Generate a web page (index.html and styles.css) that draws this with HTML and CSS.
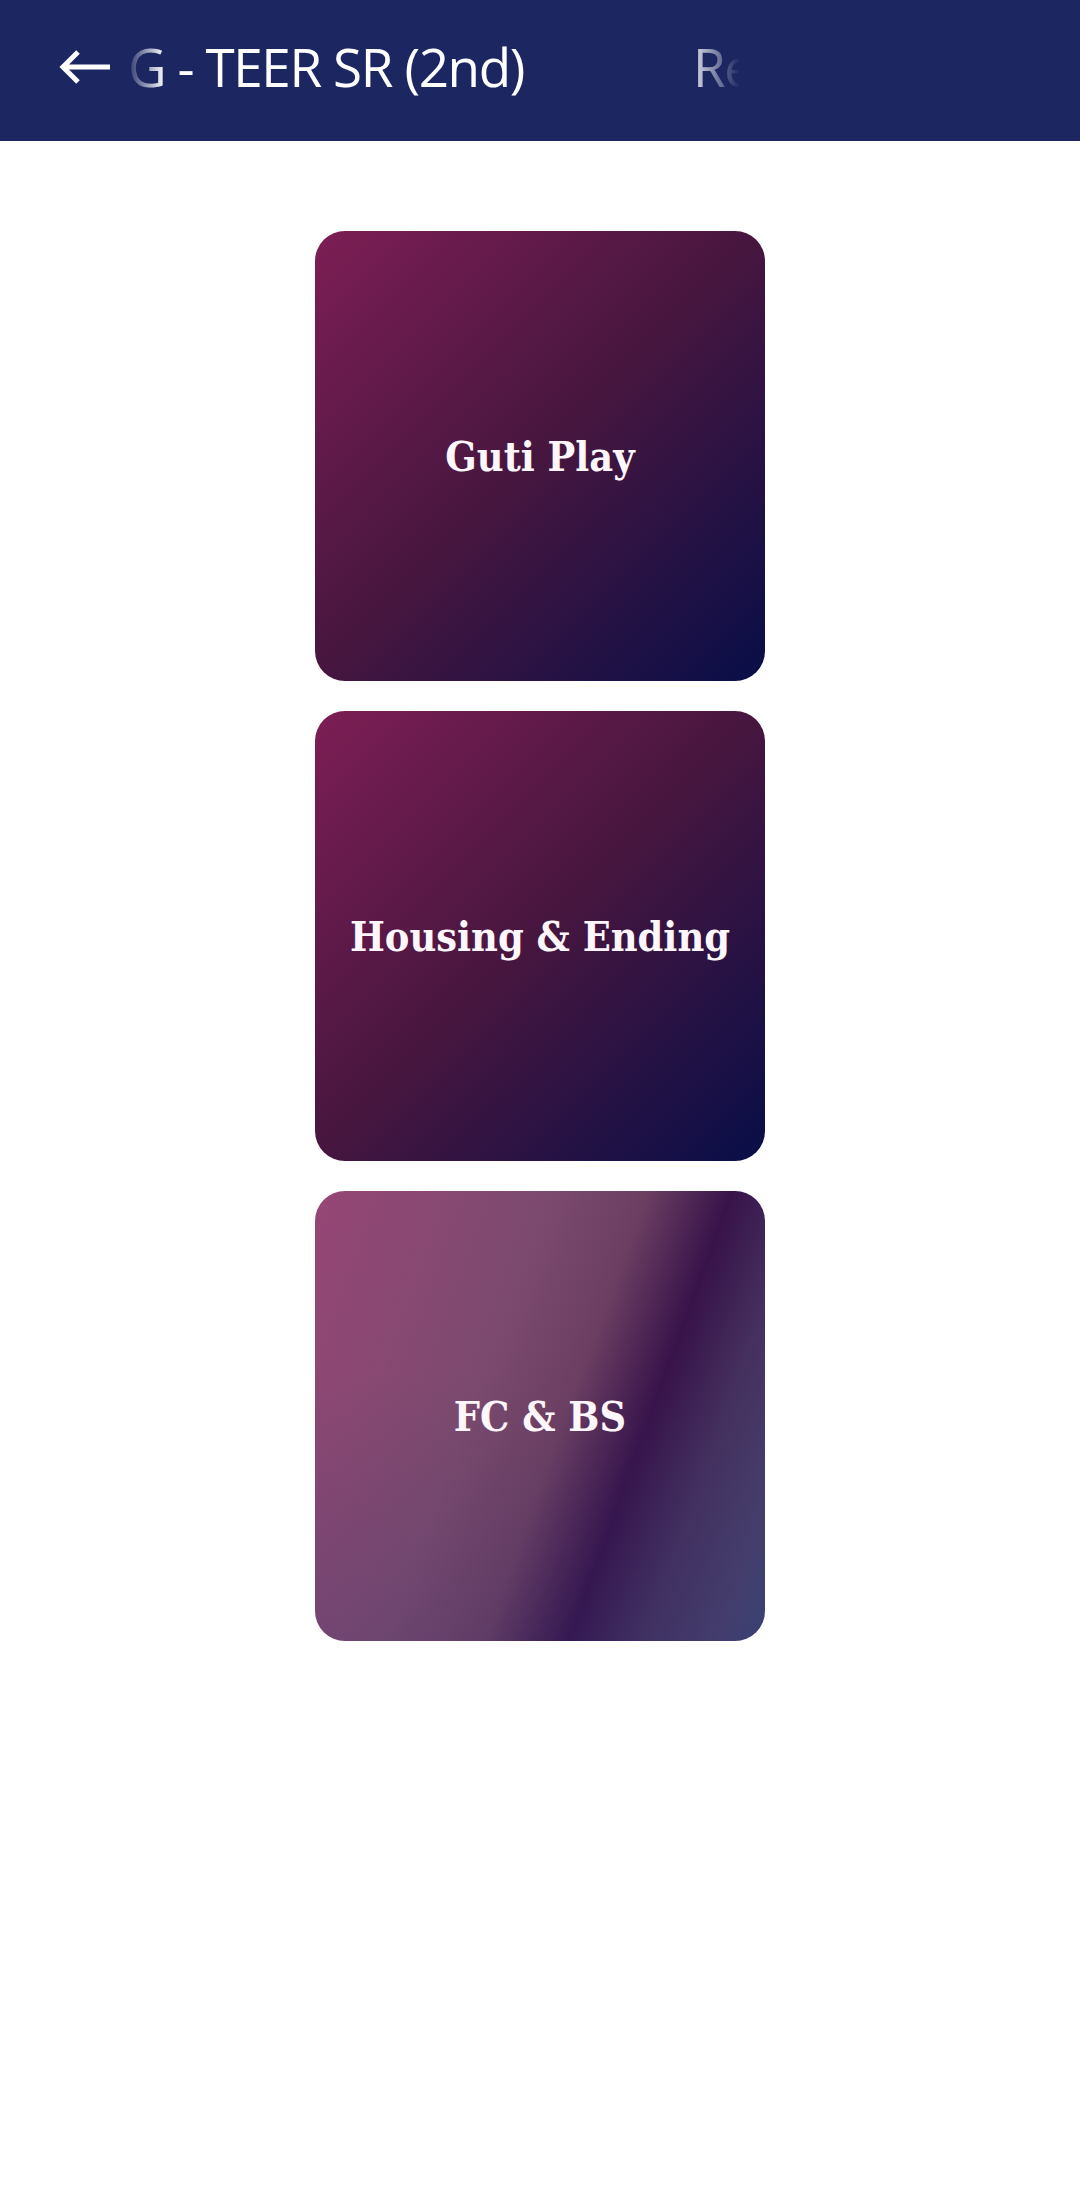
FILE: index.html
```html
<!DOCTYPE html>
<html lang="en">
<head>
<meta charset="utf-8">
<title>TEER SR (2nd)</title>
<link rel="stylesheet" href="styles.css">
</head>
<body>
<header class="topbar">
  <button class="back" aria-label="Back">
    <svg viewBox="0 0 54 36" width="54" height="36" aria-hidden="true">
      <path d="M52 18H5M20 3L5 18L20 33" fill="none" stroke="#ffffff" stroke-width="5" stroke-linecap="butt" stroke-linejoin="miter"/>
    </svg>
  </button>
  <div class="marquee">
    <div class="marquee-track">
      <span class="marquee-item">G - TEER SR (2nd)</span>
      <span class="marquee-item">Re</span>
    </div>
  </div>
</header>
<main class="menu">
  <a class="tile tile-dark" href="#"><span class="tile-label">Guti Play</span></a>
  <a class="tile tile-dark" href="#"><span class="tile-label">Housing &amp; Ending</span></a>
  <a class="tile tile-soft" href="#"><span class="tile-label">FC &amp; BS</span></a>
</main>
</body>
</html>
```
FILE: styles.css
```css
html, body {
  margin: 0;
  padding: 0;
  background: #ffffff;
}

body {
  width: 1080px;
  min-height: 2205px;
  font-family: "Open Sans", "Noto Sans", sans-serif;
}

.topbar {
  height: 141px;
  box-sizing: border-box;
  background: #1c2762;
  display: flex;
  align-items: center;
  padding: 0 0 8px 58px;
}

.back {
  display: flex;
  align-items: center;
  justify-content: center;
  width: 54px;
  height: 36px;
  padding: 0;
  margin: 0;
  border: 0;
  background: none;
}

.back svg {
  display: block;
}

.marquee {
  margin-left: 13px;
  width: 615px;
  overflow: hidden;
  -webkit-mask-image: linear-gradient(90deg, transparent 0, #000 40px, #000 calc(100% - 56px), transparent 100%);
  mask-image: linear-gradient(90deg, transparent 0, #000 40px, #000 calc(100% - 56px), transparent 100%);
}

.marquee-track {
  display: flex;
  white-space: nowrap;
  gap: 169px;
  padding-left: 3px;
}

.marquee-item {
  color: #ffffff;
  font-size: 53px;
  line-height: 72px;
  font-weight: 500;
  letter-spacing: -1.4px;
}

.menu {
  display: flex;
  flex-direction: column;
  align-items: center;
  gap: 30px;
  padding-top: 90px;
}

.tile {
  width: 450px;
  height: 450px;
  border-radius: 30px;
  display: flex;
  align-items: center;
  justify-content: center;
  text-decoration: none;
  overflow: hidden;
}

.tile-dark {
  background: linear-gradient(135deg, #7d1e55 0%, #46163f 50%, #080e48 100%);
}

.tile-soft {
  background:
    linear-gradient(180deg, rgba(40, 50, 120, 0) 40%, rgba(40, 50, 120, 0.18) 100%),
    linear-gradient(110deg, #964676 0%, #7c4a6e 38%, #6c3f62 54%, #38134a 68%, #45305e 80%, #483f6a 92%, #3c4473 100%);
}

.tile-label {
  font-family: "DejaVu Serif Condensed", "DejaVu Serif", "Liberation Serif", serif;
  font-stretch: condensed;
  font-weight: bold;
  font-size: 41px;
  color: #fdf6fa;
  line-height: 1;
  margin-top: 2px;
}
```
